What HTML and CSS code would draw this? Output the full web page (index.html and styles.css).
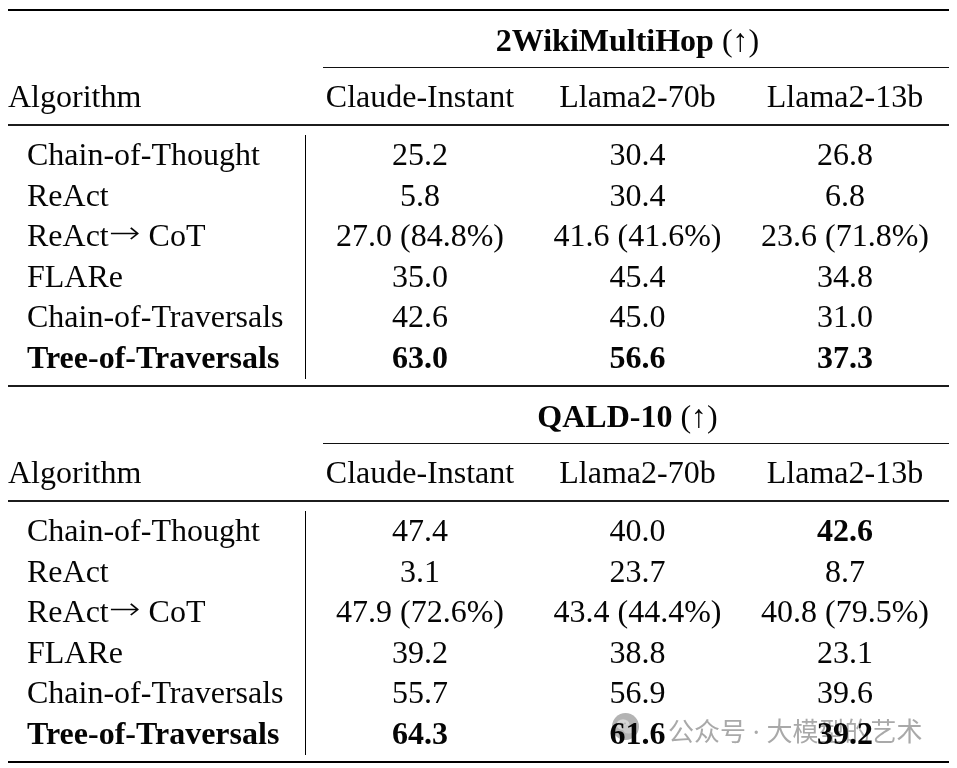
FILE: index.html
```html
<!DOCTYPE html>
<html lang="en">
<head>
<meta charset="utf-8">
<title>Results table</title>
<link rel="stylesheet" href="styles.css">
</head>
<body>
<div class="page">
  <div class="booktab">
    <div class="rule thick"></div>

    <div class="title-row">
      <div class="dataset"><b>2WikiMultiHop</b> (↑)</div>
    </div>
    <div class="cmid"></div>
    <div class="row head">
      <div class="c1">Algorithm</div>
      <div class="cn">Claude-Instant</div>
      <div class="cn">Llama2-70b</div>
      <div class="cn">Llama2-13b</div>
    </div>
    <div class="rule mid"></div>
    <div class="data">
      <div class="row"><div class="c1">Chain-of-Thought</div><div class="cn">25.2</div><div class="cn">30.4</div><div class="cn">26.8</div></div>
      <div class="row"><div class="c1">ReAct</div><div class="cn">5.8</div><div class="cn">30.4</div><div class="cn">6.8</div></div>
      <div class="row"><div class="c1">ReAct<span class="arrow">→</span> CoT</div><div class="cn">27.0 (84.8%)</div><div class="cn">41.6 (41.6%)</div><div class="cn">23.6 (71.8%)</div></div>
      <div class="row"><div class="c1">FLARe</div><div class="cn">35.0</div><div class="cn">45.4</div><div class="cn">34.8</div></div>
      <div class="row"><div class="c1">Chain-of-Traversals</div><div class="cn">42.6</div><div class="cn">45.0</div><div class="cn">31.0</div></div>
      <div class="row best"><div class="c1">Tree-of-Traversals</div><div class="cn">63.0</div><div class="cn">56.6</div><div class="cn">37.3</div></div>
    </div>
    <div class="rule mid"></div>

    <div class="title-row">
      <div class="dataset"><b>QALD-10</b> (↑)</div>
    </div>
    <div class="cmid"></div>
    <div class="row head">
      <div class="c1">Algorithm</div>
      <div class="cn">Claude-Instant</div>
      <div class="cn">Llama2-70b</div>
      <div class="cn">Llama2-13b</div>
    </div>
    <div class="rule mid"></div>
    <div class="data">
      <div class="row"><div class="c1">Chain-of-Thought</div><div class="cn">47.4</div><div class="cn">40.0</div><div class="cn"><b>42.6</b></div></div>
      <div class="row"><div class="c1">ReAct</div><div class="cn">3.1</div><div class="cn">23.7</div><div class="cn">8.7</div></div>
      <div class="row"><div class="c1">ReAct<span class="arrow">→</span> CoT</div><div class="cn">47.9 (72.6%)</div><div class="cn">43.4 (44.4%)</div><div class="cn">40.8 (79.5%)</div></div>
      <div class="row"><div class="c1">FLARe</div><div class="cn">39.2</div><div class="cn">38.8</div><div class="cn">23.1</div></div>
      <div class="row"><div class="c1">Chain-of-Traversals</div><div class="cn">55.7</div><div class="cn">56.9</div><div class="cn">39.6</div></div>
      <div class="row best"><div class="c1">Tree-of-Traversals</div><div class="cn">64.3</div><div class="cn">61.6</div><div class="cn">39.2</div></div>
    </div>
    <div class="rule thick"></div>
  </div>

  <div class="watermark">
    <svg class="wm-icon" width="27" height="27" viewBox="0 0 27 27" aria-hidden="true">
      <circle cx="13.5" cy="13.5" r="13.5" fill="#b3b3b3"/>
      <ellipse cx="11" cy="11.5" rx="6.5" ry="5.3" fill="#d6d6d6"/>
      <ellipse cx="16.5" cy="16" rx="5.5" ry="4.5" fill="#cacaca"/>
      <circle cx="8.8" cy="10.5" r="0.9" fill="#b3b3b3"/>
      <circle cx="13" cy="10.5" r="0.9" fill="#b3b3b3"/>
    </svg>
    <span class="wm-text">公众号<span class="wm-dot"> · </span>大模型的艺术</span>
  </div>
</div>
</body>
</html>
```

FILE: styles.css
```css
html, body {
  margin: 0;
  padding: 0;
  background: #ffffff;
}

.page {
  position: relative;
  width: 957px;
  height: 768px;
  padding: 9px 0 0 8px;
  box-sizing: border-box;
  font-family: "Liberation Serif", "Times New Roman", serif;
  font-size: 32px;
  color: #050505;
}

.booktab {
  width: 941px;
  position: relative;
  z-index: 1;
}

.rule {
  width: 100%;
}

.rule.thick {
  height: 2px;
  background: #000;
}

.rule.mid {
  height: 2px;
  background: #1c1c1c;
}

.cmid {
  height: 1px;
  margin-left: 315px;
  background: #111;
}

.title-row {
  height: 56px;
  padding-top: 1px;
  box-sizing: border-box;
  line-height: 56px;
  padding-left: 298px;
}

.dataset {
  text-align: center;
  white-space: nowrap;
}

.row {
  display: grid;
  grid-template-columns: 298px 228px 207px 208px;
  white-space: nowrap;
}

.row .cn {
  text-align: center;
}

.head {
  height: 56px;
  line-height: 56px;
}

.data {
  padding: 9px 0 6.4px 0;
}

.data .row > div {
  line-height: 39.2px;
  padding-bottom: 1.4px;
}

.data .c1 {
  padding-left: 19px;
  border-right: 1px solid #000;
  box-sizing: border-box;
}

.arrow {
  font-family: "DejaVu Sans", sans-serif;
  font-size: 38px;
  line-height: 0;
  font-weight: 200;
  display: inline-block;
  transform: scaleY(0.8);
}

.best {
  font-weight: bold;
}

.watermark {
  position: absolute;
  left: 612px;
  top: 712px;
  height: 36px;
  display: flex;
  align-items: center;
  gap: 29px;
  z-index: 2;
  mix-blend-mode: multiply;
  pointer-events: none;
}

.wm-icon {
  align-self: flex-start;
  margin-top: 1px;
}

.wm-text {
  font-family: "Noto Sans CJK SC", "Noto Sans", sans-serif;
  font-size: 26px;
  line-height: 26px;
  color: #a9a9a9;
}

.wm-dot {
  font-family: "Noto Sans", sans-serif;
}
```
